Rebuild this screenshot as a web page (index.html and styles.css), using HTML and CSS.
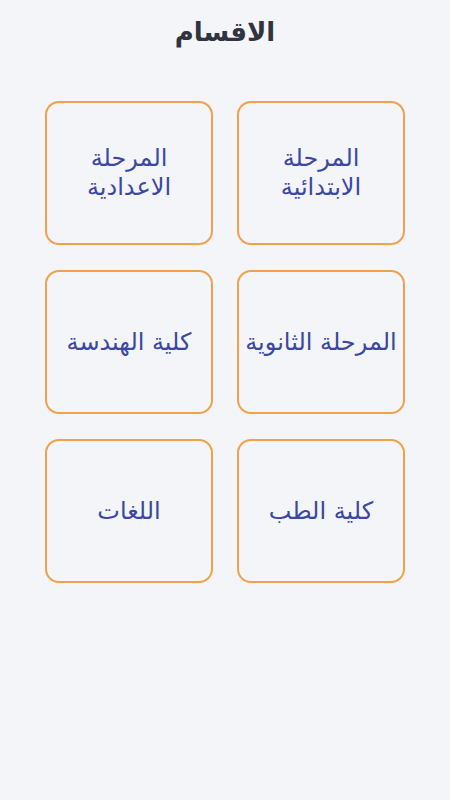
FILE: index.html
```html
<!DOCTYPE html>
<html lang="ar" dir="rtl">
<head>
    <meta charset="UTF-8">
    <meta name="viewport" content="width=device-width, initial-scale=1.0">
    <title>الاقسام</title>
    <link rel="stylesheet" href="styles.css">
</head>
<body>
    <h1 class="page-title">الاقسام</h1>

    <!-- الاقسام -->
    <div class="sections-grid">
        <button class="section-card">المرحلة<br>الابتدائية</button>
        <button class="section-card">المرحلة<br>الاعدادية</button>
        <button class="section-card">المرحلة الثانوية</button>
        <button class="section-card">كلية الهندسة</button>
        <button class="section-card">كلية الطب</button>
        <button class="section-card">اللغات</button>
    </div>
</body>
</html>
```

FILE: styles.css
```css
body {
    font-family: 'DejaVu Sans', sans-serif;
    background-color: #f4f5f9;
    margin: 0;
    padding: 0;
    min-height: 800px;
}
.page-title {
    font-size: 26px;
    font-weight: bold;
    color: #2f3440;
    text-align: center;
    margin: 0;
    padding-top: 14px;
    line-height: 36px;
}
.sections-grid {
    display: grid;
    grid-template-columns: 168px 168px;
    grid-auto-rows: 144px;
    column-gap: 24px;
    row-gap: 25px;
    justify-content: center;
    margin-top: 51px;
}
.section-card {
    font-family: 'DejaVu Sans', sans-serif;
    font-size: 24px;
    line-height: 29px;
    color: #3a47a3;
    background-color: transparent;
    border: 2px solid #f2a049;
    border-radius: 14px;
    cursor: pointer;
    padding: 0;
    display: flex;
    align-items: center;
    justify-content: center;
    text-align: center;
}
```
